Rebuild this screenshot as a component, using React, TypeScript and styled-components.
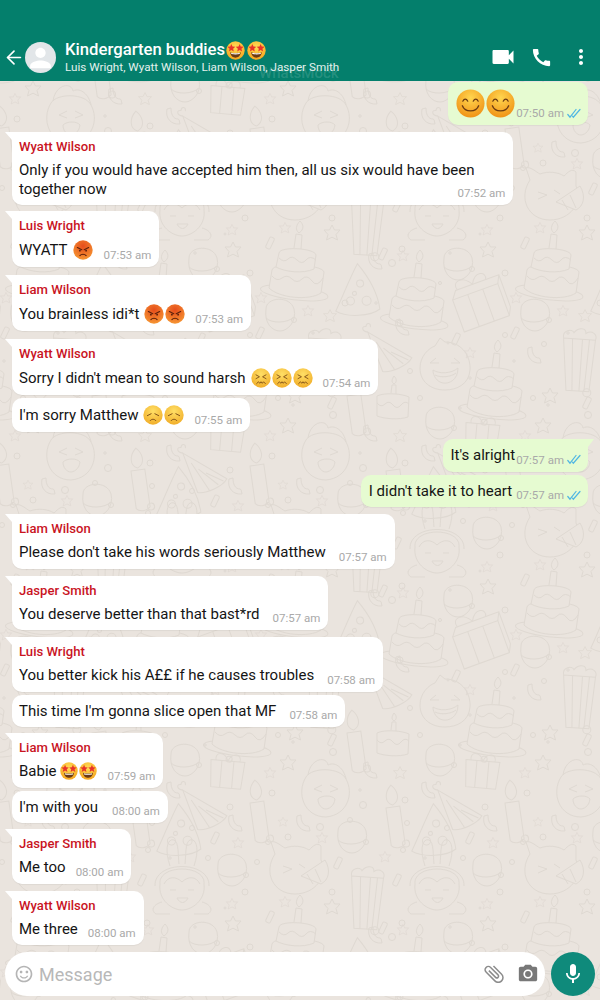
import React from "react";
import styled, { createGlobalStyle } from "styled-components";
import { ArrowLeft } from "lucide-react";
import {
  MdVideocam,
  MdCall,
  MdMoreVert,
  MdAttachFile,
  MdCameraAlt,
  MdMic,
  MdPerson,
  MdSentimentSatisfiedAlt,
} from "react-icons/md";

const GlobalStyle = createGlobalStyle`
  html, body { margin: 0; padding: 0; }
  body { font-family: Roboto, "Liberation Sans", sans-serif; background: #eae4de; }
`;

const Page = styled.div`
  position: relative;
  width: 600px;
  height: 1000px;
  overflow: hidden;
  display: flex;
  flex-direction: column;
  background: #eae4de;
`;

const WallpaperSvg = styled.svg`
  position: absolute;
  inset: 0;
  width: 600px;
  height: 1000px;
`;

const Header = styled.header`
  position: relative;
  flex: none;
  height: 81px;
  box-sizing: border-box;
  padding: 0 0 6px 3px;
  display: flex;
  align-items: flex-end;
  background: #047f6c;
  color: #fff;
`;

const BackButton = styled.div`
  display: flex;
  width: 22px;
  margin-bottom: 6px;
`;

const Avatar = styled.div`
  width: 31px;
  height: 31px;
  margin-bottom: 2px;
  border-radius: 50%;
  background: #e2e6e9;
  overflow: hidden;
  display: flex;
  align-items: center;
  justify-content: center;
  color: #fff;
`;

const TitleBlock = styled.div`
  flex: 1;
  margin-left: 9px;
  min-width: 0;
`;

const Title = styled.div`
  display: flex;
  align-items: center;
  font-size: 16.7px;
  font-weight: 500;
  line-height: 20px;
`;

const Subtitle = styled.div`
  font-size: 11.7px;
  line-height: 15px;
  color: #e3f1ee;
  white-space: nowrap;
`;

const HeaderActions = styled.div`
  display: flex;
  align-items: center;
  margin-bottom: 4px;
  color: #fff;
`;

const HeaderIcon = styled.span`
  display: flex;
  justify-content: center;
  width: 39px;
`;

const Watermark = styled.div`
  position: absolute;
  left: 259px;
  top: 66px;
  font-size: 15px;
  line-height: 15px;
  font-weight: 500;
  color: rgba(255, 255, 255, 0.14);
  z-index: 3;
`;

const Chat = styled.main`
  position: relative;
  flex: 1;
  min-height: 0;
  padding: 1px 12px 0;
  display: flex;
  flex-direction: column;
  align-items: flex-start;
`;

const Bubble = styled.div<{ $out?: boolean; $top: number; $tail?: boolean }>`
  position: relative;
  box-sizing: border-box;
  align-self: ${(p) => (p.$out ? "flex-end" : "flex-start")};
  margin-top: ${(p) => p.$top}px;
  padding: ${(p) => (p.$out ? "7px 7px 7px 8px" : "7px 8px 7px 7px")};
  border-radius: 10px;
  border-top-left-radius: ${(p) => (p.$tail && !p.$out ? 0 : 10)}px;
  border-top-right-radius: ${(p) => (p.$tail && p.$out ? 0 : 10)}px;
  background: ${(p) => (p.$out ? "#e6fbd1" : "#fff")};
  box-shadow: 0 1px 1px rgba(0, 0, 0, 0.05);

  ${(p) =>
    p.$tail
      ? `&::before {
          content: "";
          position: absolute;
          top: 0;
          ${p.$out ? "right: -6px;" : "left: -7px;"}
          border-top: 8px solid ${p.$out ? "#e6fbd1" : "#fff"};
          ${p.$out ? "border-right: 6px solid transparent;" : "border-left: 7px solid transparent;"}
        }`
      : ""}
`;

const Sender = styled.div`
  font-size: 13.1px;
  line-height: 18px;
  font-weight: 500;
  color: #c9141f;
  margin: -1px 0 5px;
`;

const BubbleRow = styled.div`
  display: flex;
  align-items: flex-end;
`;

const MessageText = styled.div`
  font-size: 15px;
  line-height: 18.5px;
  color: #151515;
  white-space: nowrap;
  display: flex;
  align-items: center;
`;

const TextLines = styled.span`
  display: block;
`;

const Meta = styled.div<{ $gap: number }>`
  flex: none;
  display: flex;
  align-items: center;
  gap: 3px;
  margin-left: ${(p) => p.$gap}px;
  margin-bottom: -2px;
  font-size: 11.5px;
  line-height: 14px;
  color: #a9a9a9;
`;

const Composer = styled.footer`
  position: relative;
  flex: none;
  height: 52px;
  box-sizing: border-box;
  padding: 4px 5px 4px 5px;
  display: flex;
  gap: 6px;
`;

const InputPill = styled.div`
  flex: 1;
  display: flex;
  align-items: center;
  padding: 0 0 0 9px;
  border-radius: 22px;
  background: #fff;
  color: #b5b5b5;
`;

const Placeholder = styled.span`
  flex: 1;
  margin-left: 5px;
  font-size: 18px;
  color: #b8b8b8;
`;

const PillIcon = styled.span<{ $rotate?: number; $color: string }>`
  display: flex;
  justify-content: center;
  width: 34px;
  color: ${(p) => p.$color};
  transform: rotate(${(p) => p.$rotate ?? 0}deg);
`;

const MicButton = styled.div`
  flex: none;
  width: 44px;
  height: 44px;
  border-radius: 50%;
  background: #0f8a7b;
  color: #fff;
  display: flex;
  align-items: center;
  justify-content: center;
`;

/* ---------- emoji ---------- */

type EmojiKind = "star" | "smile" | "angry" | "confounded" | "sad";

const EmojiSvg = styled.svg<{ $size: number; $shift: number }>`
  flex: none;
  width: ${(p) => p.$size}px;
  height: ${(p) => p.$size}px;
  margin-left: ${(p) => p.$shift}px;
`;

const faces: Record<EmojiKind, [string, string]> = {
  star: ["#ffdc55", "#f5a21c"],
  smile: ["#ffd64f", "#ef8d12"],
  angry: ["#e64d1c", "#f79a34"],
  confounded: ["#ffdf66", "#f0ab26"],
  sad: ["#ffdf66", "#f0ab26"],
};

const StarShape = ({ x, y, r }: { x: number; y: number; r: number }) => {
  const pts: string[] = [];
  for (let i = 0; i < 10; i++) {
    const rad = i % 2 === 0 ? r : r * 0.45;
    const a = (Math.PI / 5) * i - Math.PI / 2;
    pts.push(`${x + rad * Math.cos(a)},${y + rad * Math.sin(a)}`);
  }
  return <polygon points={pts.join(" ")} fill="#e8342a" />;
};

const Emoji = ({ kind, size = 20, shift = 0 }: { kind: EmojiKind; size?: number; shift?: number }) => (
  <EmojiSvg viewBox="0 0 32 32" $size={size} $shift={shift}>
    <defs>
      <radialGradient id={`face-${kind}`} cx="50%" cy="30%" r="75%">
        <stop offset="0%" stopColor={faces[kind][0]} />
        <stop offset="100%" stopColor={faces[kind][1]} />
      </radialGradient>
    </defs>
    <circle cx="16" cy="16" r="15.5" fill={`url(#face-${kind})`} />
    {kind === "star" && (
      <>
        <StarShape x={9} y={12} r={7} />
        <StarShape x={23} y={12} r={7} />
        <path d="M7 19 C11 21 21 21 25 19 C24 26 20 28 16 28 C12 28 8 26 7 19Z" fill="#6b3a14" />
        <path d="M8.5 19.8 C12 21 20 21 23.5 19.8 L23 22 C19 23 13 23 9 22Z" fill="#fff" />
      </>
    )}
    {kind === "smile" && (
      <g fill="none" stroke="#6a3a12" strokeWidth="1.3" strokeLinecap="round">
        <path d="M7.5 13.5 C9 10.5 11.5 10.5 13 13.5" />
        <path d="M19 13.5 C20.5 10.5 23 10.5 24.5 13.5" />
        <path d="M7 18.5 C10 26 22 26 25 18.5" strokeWidth="1.5" />
      </g>
    )}
    {kind === "angry" && (
      <g fill="none" stroke="#5b1f0c" strokeLinecap="round">
        <path d="M7 12 L14 15.5" strokeWidth="1.9" />
        <path d="M25 12 L18 15.5" strokeWidth="1.9" />
        <circle cx="11" cy="17" r="1.5" fill="#5b1f0c" stroke="none" />
        <circle cx="21" cy="17" r="1.5" fill="#5b1f0c" stroke="none" />
        <path d="M11 25 C13.5 22 18.5 22 21 25" strokeWidth="1.7" />
      </g>
    )}
    {kind === "confounded" && (
      <g fill="none" stroke="#7a4a14" strokeWidth="1.4" strokeLinecap="round" strokeLinejoin="round">
        <path d="M8 11 L13.5 14 L8 17" />
        <path d="M24 11 L18.5 14 L24 17" />
        <path d="M9 25 L12 22 L14 24.5 L16 22 L18 24.5 L20 22 L23 25" />
      </g>
    )}
    {kind === "sad" && (
      <g fill="none" stroke="#7a4a14" strokeWidth="1.5" strokeLinecap="round">
        <path d="M7 17 L13 14" />
        <path d="M25 17 L19 14" />
        <path d="M11.5 25 C13.5 22 18.5 22 20.5 25" />
      </g>
    )}
  </EmojiSvg>
);

const DoubleTick = () => (
  <svg width="14" height="11" viewBox="0 0 14 11" fill="none" stroke="#4fb6e3" strokeWidth="1.2" strokeLinecap="round">
    <path d="M0.8 6.5 L3 9.2 L9 1.5" />
    <path d="M5.5 8.2 L6.3 9.2 L13 1.5" />
  </svg>
);

/* ---------- wallpaper doodles, each drawn around 0,0 ---------- */

const bg = "#eae4de";

const Cake = () => (
  <g>
    <ellipse cx="0" cy="23" rx="34" ry="7" transform="rotate(7)" />
    <path fill={bg} d="M-25 0 C-24 -8 25 -6 27 2 L24 23 C12 31 -18 28 -28 18Z" />
    <path d="M-25 6 q5 6 10 2 t10 1 t10 0 t10 2 t11 -3" />
    <path fill={bg} d="M-18 -17 C-17 -24 18 -22 19 -15 L17 -1 C6 4 -12 2 -21 -3Z" />
    <path d="M-18 -12 q5 5 9 1 t9 1 t9 0 t10 0" />
    <path d="M-3 -22 L-1 -36 L5 -35 L4 -21" />
    <path d="M2 -37 c-4 -3 -3 -8 1 -12 c3 3 5 8 -1 12" />
  </g>
);

const SmallCake = () => (
  <g>
    <path d="M-16 -10 C-8 -14 10 -12 16 -9 L15 11 C6 14 -8 13 -16 10Z" />
    <path d="M-16 -3 q4 5 8 1 t8 1 t8 0 t8 -1" />
    <path d="M-2 -13 L-1 -21 L3 -21 L3 -12" />
    <path d="M1 -22 c-3 -2 -2 -5 0 -8 c3 3 3 6 0 8" />
  </g>
);

const Gift = () => (
  <g transform="rotate(-20)">
    <path d="M-24 -14 L24 -14 L24 20 L-24 20Z" />
    <path d="M-24 -14 L-18 -22 L28 -22 L24 -14 M24 20 L28 12 L28 -22" />
    <path d="M-8 -14 L-8 20 M8 -14 L8 20" />
    <path d="M0 -22 c-6 -12 -20 -10 -16 0 M0 -22 c6 -12 18 -8 14 0" />
  </g>
);

const SmallGift = () => (
  <g transform="rotate(5)">
    <path d="M-17 -11 L17 -11 L15 16 L-15 16Z" />
    <path d="M-6 -11 L-6 16 M6 -11 L6 16" />
    <path d="M0 -11 c-4 -10 -14 -8 -12 0 M0 -11 c4 -10 14 -8 12 0" />
    <circle cx="1" cy="-13" r="3" />
  </g>
);

const Popcorn = () => (
  <g transform="rotate(4)">
    <path d="M-16 -22 L16 -22 L13 30 L-10 30Z" />
    <path d="M-7 -22 L-4 30 M3 -22 L3 30 M10 -22 L8 30" />
    <path d="M-16 -22 c-2 -8 8 -10 10 -6 c4 -6 12 -6 12 0 c6 -4 12 0 10 6" />
    <circle cx="11" cy="31" r="4" />
  </g>
);

const LaughFace = () => (
  <g>
    <path d="M0 -24 C18 -24 26 -8 25 4 C24 18 12 24 0 24 C-14 24 -25 16 -25 2 C-25 -10 -16 -18 -10 -20 L-5 -28Z" />
    <path d="M-15 -3 L-6 -3 M-15 -3 L-9 -8 M15 -3 L6 -3 M15 -3 L9 -8" />
    <path d="M-12 4 C-6 8 6 8 13 2 C13 14 4 18 -2 17 C-8 16 -12 10 -12 4Z" />
    <path d="M-10 9 C-4 12 6 11 11 7" />
  </g>
);

const Chick = () => (
  <g>
    <path d="M-20 -16 C-14 -26 14 -26 20 -14 C28 0 22 22 0 24 C-22 24 -30 0 -20 -16Z" />
    <path d="M-18 -18 C-16 -34 0 -38 2 -28 C10 -32 18 -24 20 -14" />
    <path d="M-12 -4 L-4 -8 M-12 -4 L-4 -1 M12 -4 L4 -8 M12 -4 L4 -1" />
    <path d="M-8 6 C-4 2 6 2 9 6 C8 14 2 16 0 16 C-4 16 -8 12 -8 6Z" />
  </g>
);

const PartyHat = () => (
  <g transform="rotate(-8)">
    <path d="M4 -26 C14 -10 20 8 20 22 C10 28 -14 26 -24 18 C-16 6 -6 -12 4 -26Z" />
    <circle cx="4" cy="-6" r="3.5" />
    <circle cx="-8" cy="10" r="4" />
    <circle cx="8" cy="12" r="4.5" />
    <circle cx="-3" cy="3" r="2" />
  </g>
);

const StripedHat = () => (
  <g transform="rotate(-18)">
    <path d="M-20 -20 L14 18 C8 24 -10 26 -18 22Z" />
    <path d="M-15 -8 L-6 24 M-10 0 L4 21 M-4 6 L10 19" />
    <path d="M-20 -20 c-6 -3 -4 -8 0 -6 c2 -4 6 -2 4 2" />
  </g>
);

const Planet = () => (
  <g>
    <path d="M-14 -6 C-14 -18 10 -20 14 -6 C17 6 8 16 0 16 C-8 16 -16 8 -14 -6Z" />
    <path d="M-14 3 C-8 9 8 8 14 2" />
    <circle cx="14" cy="5" r="2.5" />
  </g>
);

const Bunny = () => (
  <g>
    <path d="M-22 4 C-24 -16 24 -16 22 4 C24 20 10 30 0 30 C-10 30 -24 20 -22 4Z" />
    <path d="M-27 6 C-28 -20 28 -20 27 6" />
    <path d="M-12 -14 C-18 -32 -14 -42 -8 -40 C-3 -38 -4 -24 -3 -16" />
    <path d="M12 -14 C18 -32 14 -42 8 -40 C3 -38 4 -24 3 -16" />
    <path d="M-18 4 C-14 -4 -6 -4 0 2 C6 -4 14 -4 18 4" />
    <path d="M-12 10 L-6 10 M6 10 L12 10" />
    <path d="M-5 18 C-2 24 3 24 6 18Z" />
    <path d="M-20 22 c-8 2 -12 8 -6 12 l14 0 M20 22 c8 2 12 8 6 12 l-14 0" />
  </g>
);

const Cat = () => (
  <g>
    <path d="M-20 -16 L-24 -28 C-20 -30 -14 -24 -10 -22 C-2 -25 8 -24 14 -20 C18 -24 22 -28 26 -24 L26 -10 C34 6 20 24 0 24 C-22 24 -32 2 -20 -16Z" />
    <path d="M-12 -4 L-3 -1 L-12 3 M4 -6 L10 -2" />
    <path d="M6 6 L30 -10 C36 0 34 10 26 14Z" fill={bg} />
    <path d="M12 4 L18 14 M20 -1 L26 12" />
  </g>
);

const Candle = () => (
  <g transform="rotate(-8)">
    <path d="M-7 -8 L7 -8 L7 30 C3 34 -4 34 -7 30Z" />
    <path d="M0 -10 c-8 -4 -6 -14 1 -20 c6 6 8 16 -1 20" />
    <circle cx="8" cy="30" r="3.5" />
  </g>
);

const Star = ({ s = 1 }: { s?: number }) => (
  <path
    transform={`scale(${s})`}
    strokeLinejoin="round"
    d="M0 -8 L2.5 -3 L8 -3 L4 1.5 L5.5 7 L0 4.2 L-5.5 7 L-4 1.5 L-8 -3 L-2.5 -3Z"
  />
);

const Moon = () => <path d="M-6 -7 C-8 2 -2 9 7 8 C6 5 7 4 5 3 C0 3 -2 -2 -2 -8Z" />;
const Confetti = () => <rect x="-2.5" y="-6" width="5" height="12" rx="1.5" transform="rotate(25)" />;

const doodles: [React.ReactNode, number, number][] = [
  [<Cake />, 552, 607],
  [<Cake />, 417, 636],
  [<Cake />, 495, 726],
  [<Gift />, 480, 642],
  [<SmallGift />, 482, 772],
  [<Popcorn />, 578, 698],
  [<Popcorn />, 366, 562],
  [<LaughFace />, 445, 703],
  [<Chick />, 581, 793],
  [<SmallCake />, 393, 743],
  [<PartyHat />, 357, 627],
  [<PartyHat />, 433, 830],
  [<StripedHat />, 393, 682],
  [<StripedHat />, 463, 803],
  [<Candle />, 394, 815],
  [<Candle />, 513, 810],
  [<Candle />, 355, 740],
  [<Planet />, 458, 601],
  [<Planet />, 535, 652],
  [<Planet />, 440, 760],
  [<Planet />, 352, 837],
  [<Planet />, 487, 533],
  [<Bunny />, 437, 543],
  [<Cat />, 550, 533],
  [<Moon />, 370, 770],
  [<Moon />, 428, 790],
  [<Moon />, 558, 823],
  [<Moon />, 490, 823],
  [<Moon />, 402, 664],
  [<Moon />, 534, 692],
  [<Moon />, 375, 598],
  [<Confetti />, 470, 838],
  [<Confetti />, 593, 863],
  [<Confetti />, 397, 543],
  [<Confetti />, 525, 580],
  [<Confetti />, 383, 591],
  [<Confetti />, 456, 676],
  [<Confetti />, 587, 740],
  [<Confetti />, 515, 670],
  [<Star />, 488, 587],
  [<Star s={0.7} />, 540, 565],
  [<Star s={0.7} />, 487, 567],
  [<Star s={0.7} />, 403, 593],
  [<Star />, 587, 570],
  [<Star s={0.7} />, 516, 635],
  [<Star s={0.7} />, 563, 648],
  [<Star s={0.8} />, 585, 653],
  [<Star />, 550, 733],
  [<Star />, 543, 763],
  [<Star s={0.8} />, 400, 773],
  [<Star s={0.7} />, 525, 773],
  [<Star s={0.6} />, 538, 822],
  [<Star s={0.7} />, 577, 838],
  [<Star s={0.7} />, 493, 843],
  [<Star s={0.7} />, 385, 857],
  [<Star s={0.7} />, 470, 690],
];

const dots: [number, number, number][] = [
  [588, 752, 3.5], [527, 793, 3], [405, 800, 3], [363, 805, 3.5], [485, 807, 3],
  [575, 827, 3.5], [407, 823, 2.5], [350, 820, 2.5], [447, 828, 2.5], [543, 837, 3],
  [523, 842, 2.5], [403, 850, 2.5], [512, 862, 2.5], [463, 858, 2.5], [587, 555, 3],
  [500, 555, 3], [402, 586, 3], [480, 571, 1], [392, 600, 3.5], [505, 672, 2.5],
  [544, 681, 2.5], [410, 708, 2.5], [420, 735, 2.5], [533, 735, 2.5], [548, 742, 1.2],
  [505, 610, 3], [514, 698, 1.2], [400, 660, 3], [376, 640, 1.2], [448, 680, 1],
  [440, 620, 1.5], [568, 670, 1.2], [470, 715, 1.2], [360, 790, 1.2], [460, 745, 1.2],
  [425, 858, 1.2], [570, 870, 1.2], [450, 590, 1.2], [600, 640, 3],
];

const Wallpaper = () => {
  const rows = [-2, -1, 0, 1];
  const cols = [-2, -1, 0, 1];
  return (
    <WallpaperSvg viewBox="0 0 600 1000" fill="none" stroke="#dfd9d2" strokeWidth="1" aria-hidden="true">
      <defs>
        <g id="tile">
          {doodles.map(([node, x, y], i) => (
            <g key={i} transform={`translate(${x} ${y})`}>
              {node}
            </g>
          ))}
          {dots.map(([x, y, r], i) => (
            <circle key={i} cx={x} cy={y} r={r} />
          ))}
        </g>
      </defs>
      {rows.map((r) =>
        cols.map((c) => <use key={`${r}-${c}`} href="#tile" x={c * 255} y={r * 337} />)
      )}
    </WallpaperSvg>
  );
};

/* ---------- data ---------- */

type Msg = {
  sender?: string;
  lines: string[];
  emoji?: EmojiKind[];
  time: string;
  top: number;
  gap: number;
  out?: boolean;
  tail?: boolean;
  emojiSize?: number;
  emojiShift?: number;
};

const messages: Msg[] = [
  { lines: [], emoji: ["smile", "smile"], emojiSize: 29, time: "07:50 am", top: 0, gap: 1, out: true },
  {
    sender: "Wyatt Wilson",
    lines: ["Only if you would have accepted him then, all us six would have been", "together now"],
    time: "07:52 am",
    top: 7,
    gap: -17,
    tail: true,
  },
  { sender: "Luis Wright", lines: ["WYATT"], emoji: ["angry"], time: "07:53 am", top: 6, gap: 11, tail: true },
  { sender: "Liam Wilson", lines: ["You brainless idi*t"], emoji: ["angry", "angry"], time: "07:53 am", top: 8, gap: 10, tail: true },
  {
    sender: "Wyatt Wilson",
    lines: ["Sorry I didn't mean to sound harsh"],
    emoji: ["confounded", "confounded", "confounded"],
    time: "07:54 am",
    top: 8,
    gap: 10,
    tail: true,
  },
  { lines: ["I'm sorry Matthew"], emoji: ["sad", "sad"], time: "07:55 am", top: 3, gap: 10 },
  { lines: ["It's alright"], time: "07:57 am", top: 7, gap: 1, out: true, tail: true },
  { lines: ["I didn't take it to heart"], time: "07:57 am", top: 3, gap: 4, out: true },
  { sender: "Liam Wilson", lines: ["Please don't take his words seriously Matthew"], time: "07:57 am", top: 7, gap: 13, tail: true },
  { sender: "Jasper Smith", lines: ["You deserve better than that bast*rd"], time: "07:57 am", top: 7, gap: 13, tail: true },
  { sender: "Luis Wright", lines: ["You better kick his A££ if he causes troubles"], time: "07:58 am", top: 7, gap: 13, tail: true },
  { lines: ["This time I'm gonna slice open that MF"], time: "07:58 am", top: 3, gap: 13 },
  { sender: "Liam Wilson", lines: ["Babie"], emoji: ["star", "star"], emojiSize: 18, emojiShift: 3, time: "07:59 am", top: 6, gap: 11, tail: true },
  { lines: ["I'm with you"], time: "08:00 am", top: 3, gap: 14 },
  { sender: "Jasper Smith", lines: ["Me too"], time: "08:00 am", top: 6, gap: 10, tail: true },
  { sender: "Wyatt Wilson", lines: ["Me three"], time: "08:00 am", top: 7, gap: 10, tail: true },
];

export default function App() {
  return (
    <>
      <GlobalStyle />
      <Page>
        <Wallpaper />
        <Header>
          <BackButton>
            <ArrowLeft size={23} strokeWidth={1.8} />
          </BackButton>
          <Avatar>
            <MdPerson size={34} />
          </Avatar>
          <TitleBlock>
            <Title>
              Kindergarten buddies
              <Emoji kind="star" size={19} shift={1} />
              <Emoji kind="star" size={19} shift={2} />
            </Title>
            <Subtitle>Luis Wright, Wyatt Wilson, Liam Wilson, Jasper Smith</Subtitle>
          </TitleBlock>
          <HeaderActions>
            <HeaderIcon>
              <MdVideocam size={28} />
            </HeaderIcon>
            <HeaderIcon>
              <MdCall size={23} />
            </HeaderIcon>
            <HeaderIcon>
              <MdMoreVert size={24} />
            </HeaderIcon>
          </HeaderActions>
        </Header>
        <Watermark>WhatsMock</Watermark>
        <Chat>
          {messages.map((m, i) => (
            <Bubble key={i} $out={m.out} $top={m.top} $tail={m.tail}>
              {m.sender && <Sender>{m.sender}</Sender>}
              <BubbleRow>
                <MessageText>
                  <TextLines>
                    {m.lines.map((t, j) => (
                      <React.Fragment key={j}>
                        {j > 0 && <br />}
                        {t}
                      </React.Fragment>
                    ))}
                  </TextLines>
                  {m.emoji?.map((k, j) => (
                    <Emoji
                      key={j}
                      kind={k}
                      size={m.emojiSize ?? 20}
                      shift={j === 0 ? (m.lines.length ? m.emojiShift ?? 5 : 0) : 1}
                    />
                  ))}
                </MessageText>
                <Meta $gap={m.gap}>
                  {m.time}
                  {m.out && <DoubleTick />}
                </Meta>
              </BubbleRow>
            </Bubble>
          ))}
        </Chat>
        <Composer>
          <InputPill>
            <MdSentimentSatisfiedAlt size={20} />
            <Placeholder>Message</Placeholder>
            <PillIcon $rotate={-45} $color="#8c8c8c">
              <MdAttachFile size={24} />
            </PillIcon>
            <PillIcon $color="#787878">
              <MdCameraAlt size={22} />
            </PillIcon>
          </InputPill>
          <MicButton>
            <MdMic size={24} />
          </MicButton>
        </Composer>
      </Page>
    </>
  );
}
